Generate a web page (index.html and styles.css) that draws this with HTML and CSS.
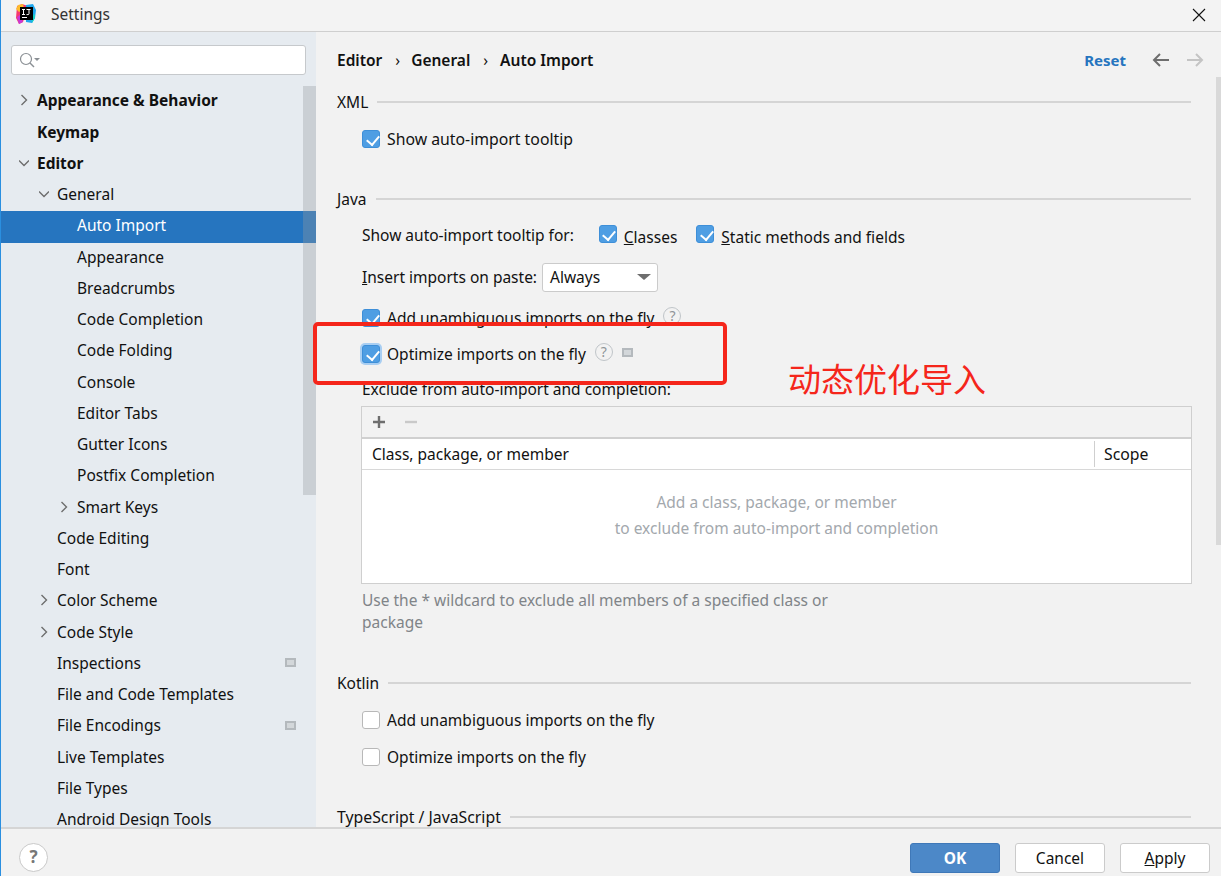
FILE: index.html
```html
<!DOCTYPE html>
<html lang="en">
<head>
<meta charset="utf-8">
<title>Settings</title>
<link rel="stylesheet" href="styles.css">
</head>
<body>
<div class="window">
  <header class="titlebar">
    <svg class="logo" width="20" height="20" viewBox="0 0 20 20">
      <path d="M1 2 6 0l6 2-5 16-4 2-3-6z" fill="#f5386f"/>
      <path d="M0 5 2 1l5-1 1 5-5 3z" fill="#fdbb2d"/>
      <path d="M1 13l3-2 3 7-4 2z" fill="#c838d8"/>
      <path d="M10 1l7-1 3 6-1 8-3 5-6-1z" fill="#1fa7ee"/>
      <path d="M15 12l4-2 0 4-3 5z" fill="#18d2c8"/>
      <rect x="4" y="3" width="13" height="13" fill="#000"/>
      <rect x="6" y="13" width="5" height="1" fill="#fff"/>
      <path d="M6 5.500h3M7.500 5.500v5M6 10.500h3M10.500 5.500h4M13 5.500v4.300q0 .8-1 .8h-1.500" fill="none" stroke="#fff" stroke-width="1"/>
    </svg>
    <span class="title">Settings</span>
    <svg class="close" width="14" height="14" viewBox="0 0 14 14"><path d="M1 1l12 12M13 1 1 13" stroke="#111" stroke-width="1.100" fill="none"/></svg>
  </header>

  <div class="body">
    <aside class="sidebar">
      <div class="search">
        <svg width="22" height="16" viewBox="0 0 22 16"><circle cx="7" cy="7" r="5.500" fill="none" stroke="#8a8f94" stroke-width="1.200"/><path d="M11 11l4 4" stroke="#8a8f94" stroke-width="1.400"/><path d="M15 6h6l-3 3z" fill="#8a8f94"/></svg>
      </div>
      <div class="tree-wrap">
        <ul class="tree">
          <li class="node l0 bold"><svg class="chev" viewBox="0 0 10 12"><path d="M2.500 1l5 5-5 5" /></svg>Appearance &amp; Behavior</li>
          <li class="node l0 bold"><span class="nochev"></span>Keymap</li>
          <li class="node l0 bold"><svg class="chev" viewBox="0 0 10 12"><path d="M0 3.500l5 5 5-5" /></svg>Editor</li>
          <li class="node l1"><svg class="chev" viewBox="0 0 10 12"><path d="M0 3.500l5 5 5-5" /></svg>General</li>
          <li class="node l2 selected">Auto Import</li>
          <li class="node l2">Appearance</li>
          <li class="node l2">Breadcrumbs</li>
          <li class="node l2">Code Completion</li>
          <li class="node l2">Code Folding</li>
          <li class="node l2">Console</li>
          <li class="node l2">Editor Tabs</li>
          <li class="node l2">Gutter Icons</li>
          <li class="node l2">Postfix Completion</li>
          <li class="node l1b"><svg class="chev" viewBox="0 0 10 12"><path d="M2.500 1l5 5-5 5" /></svg>Smart Keys</li>
          <li class="node l1c">Code Editing</li>
          <li class="node l1c">Font</li>
          <li class="node l1"><svg class="chev" viewBox="0 0 10 12"><path d="M2.500 1l5 5-5 5" /></svg>Color Scheme</li>
          <li class="node l1"><svg class="chev" viewBox="0 0 10 12"><path d="M2.500 1l5 5-5 5" /></svg>Code Style</li>
          <li class="node l1c">Inspections<span class="proj"></span></li>
          <li class="node l1c">File and Code Templates</li>
          <li class="node l1c">File Encodings<span class="proj"></span></li>
          <li class="node l1c">Live Templates</li>
          <li class="node l1c">File Types</li>
          <li class="node l1c">Android Design Tools</li>
        </ul>
        <div class="tree-thumb"></div>
      </div>
    </aside>

    <main class="main">
      <div class="crumbs">
        <span>Editor</span><span class="sep">›</span><span>General</span><span class="sep sep2">›</span><span>Auto Import</span>
        <span class="spacer"></span>
        <span class="reset">Reset</span>
        <svg class="arrow" width="18" height="14" viewBox="0 0 18 14"><path d="M17 7H2M8 1 2 7l6 6" fill="none" stroke="#6e6e6e" stroke-width="2"/></svg>
        <svg class="arrow" width="18" height="14" viewBox="0 0 18 14"><path d="M1 7h15M10 1l6 6-6 6" fill="none" stroke="#c4c4c4" stroke-width="2"/></svg>
      </div>

      <div class="section-title xml"><span>XML</span><i></i></div>
      <label class="row check-row r-xml"><span class="cb on"></span><span class="wide">Show auto-import tooltip</span></label>

      <div class="section-title java"><span>Java</span><i></i></div>
      <div class="row r-tip">
        <span class="lbl">Show auto-import tooltip for:</span>
        <span class="inline-check"><span class="cb on"></span><span><u>C</u>lasses</span></span>
        <span class="inline-check"><span class="cb on"></span><span><u>S</u>tatic methods and fields</span></span>
      </div>
      <div class="row r-paste">
        <span><u>I</u>nsert imports on paste:</span>
        <span class="combo">Always<i class="caret"></i></span>
      </div>
      <div class="row r-add"><span class="cb on"></span>Add unambiguous imports on the fly<span class="help"></span></div>
      <div class="row r-opt"><span class="cb on focus"></span>Optimize imports on the fly<span class="help"></span><span class="proj inline"></span></div>
      <div class="row r-excl">Exclude from auto-import and completion:</div>

      <div class="table">
        <div class="toolbar">
          <svg width="14" height="14" viewBox="0 0 14 14"><path d="M7 1v12M1 7h12" stroke="#6e6e6e" stroke-width="2.400"/></svg>
          <svg width="14" height="14" viewBox="0 0 14 14"><path d="M1 7h12" stroke="#c9c9c9" stroke-width="2.400"/></svg>
        </div>
        <div class="thead"><span class="c1">Class, package, or member</span><span class="c2">Scope</span></div>
        <div class="tbody"><p>Add a class, package, or member</p><p>to exclude from auto-import and completion</p></div>
      </div>
      <p class="hint">Use the * wildcard to exclude all members of a specified class or<br>package</p>

      <div class="section-title kotlin"><span>Kotlin</span><i></i></div>
      <div class="row r-k1"><span class="cb"></span>Add unambiguous imports on the fly</div>
      <div class="row r-k2"><span class="cb"></span>Optimize imports on the fly</div>
      <div class="section-title ts"><span class="wide">TypeScript / JavaScript</span><i></i></div>
      <div class="main-thumb"></div>
    </main>
  </div>

  <footer class="footer">
    <span class="round-help">?</span>
    <span class="spacer"></span>
    <button class="btn ok">OK</button>
    <button class="btn">Cancel</button>
    <button class="btn"><span><u>A</u>pply</span></button>
  </footer>

  <div class="redbox"></div>
  <div class="annot">动态优化导入</div>
</div>
</body>
</html>
```
FILE: styles.css
```css
* { box-sizing: border-box; }
html, body { margin: 0; height: 100%; }
body { font-family: "Noto Sans", "Open Sans", sans-serif; font-size: 15.5px; color: #111; background: #f2f2f2; overflow: hidden; }
.window { position: relative; width: 1221px; height: 876px; border-left: 1px solid #2a8fe0; display: flex; flex-direction: column; overflow: hidden; background: #f2f2f2; }
.wide { font-size: 15.8px; }

.titlebar { height: 32px; flex: none; display: flex; align-items: center; padding-left: 15px; padding-bottom: 3px; border-bottom: 1px solid #cfcfcf; background: #f3f3f3; }
.logo { flex: none; }
.title { margin-left: 15px; color: #333; }
.close { margin-left: auto; margin-right: 15px; margin-top: 1px; }

.body { flex: 1; display: flex; min-height: 0; }
.sidebar { width: 315px; flex: none; background: #e6ebf0; display: flex; flex-direction: column; overflow: hidden; }
.search { margin: 13px 10px 0 10px; height: 30px; flex: none; border: 1px solid #c6c9cc; border-radius: 3px; background: #fff; display: flex; align-items: center; padding-left: 7px; }
.tree-wrap { position: relative; flex: 1; min-height: 0; overflow: hidden; margin-top: 11px; }
.tree { list-style: none; margin: 0; padding: 0.25px 0 0; }
.node { height: 31.26px; padding-bottom: 3px; display: flex; align-items: center; white-space: nowrap; }
.bold { font-weight: 700; }
.l0 { padding-left: 18px; }
.l1 { padding-left: 38px; }
.l1b { padding-left: 58px; }
.l1c { padding-left: 56px; }
.l2 { padding-left: 76px; }
.chev { width: 10px; height: 12px; flex: none; margin-right: 8px; fill: none; stroke: #6e6e6e; stroke-width: 1.400; }
.nochev { width: 18px; flex: none; }
.selected { background: #2675bf; color: #fff; }
.proj { display: inline-block; width: 11px; height: 9px; border: 2px solid #b4b9bd; background: #d3d7da; margin-left: auto; margin-right: 20px; }
.proj.inline { margin: -3px 0 0 9px; }
.tree-thumb { position: absolute; right: 0; top: 0; width: 13px; height: 409px; background: rgba(150,155,160,.35); }

.main { position: relative; flex: 1; min-width: 0; padding-left: 21px; padding-right: 29px; overflow: hidden; }
.main-thumb { position: absolute; right: 0; top: 45px; width: 5px; height: 468px; background: #d9d9d9; }
.crumbs { height: 56px; display: flex; align-items: center; font-weight: 600; padding-bottom: 1px; margin-right: 1px; }
.sep { margin: 0 11px 0 13px; font-weight: 400; }
.sep2 { margin-right: 12px; }
.spacer { flex: 1; }
.reset { font-weight: 700; font-size: 15px; color: #2675bf; margin-right: 26px; }
.arrow { margin-right: 16px; }
.crumbs .arrow:last-child { margin-right: -13px; }

.section-title { display: flex; align-items: center; height: 28px; gap: 9px; margin-right: 1px; }
.section-title i { flex: 1; height: 2px; background: #d5d5d5; }
.row { display: flex; align-items: center; height: 30px; padding-left: 25px; white-space: nowrap; }
.r-xml { margin-top: 8px; }
.section-title.java { margin-top: 31px; }
.r-tip { margin-top: 7px; }
.lbl { margin-right: 25px; }
.inline-check { display: inline-flex; align-items: center; margin-right: 19px; padding-top: 4px; }
.inline-check .cb { margin-right: 7px; margin-top: -6px; }
.r-paste { margin-top: 12px; }
.combo { position: relative; display: inline-block; width: 116px; height: 29px; line-height: 27px; margin-left: 5px; padding-left: 7px; border: 1px solid #cbcbcb; border-radius: 3px; background: #fff; }
.caret { position: absolute; right: 6px; top: 10px; border-style: solid; border-width: 6px 7px 0; border-color: #6e6e6e transparent transparent; }
.r-add { margin-top: 11px; }
.r-opt { margin-top: 6px; }
.r-excl { margin-top: 5px; }
.cb { display: inline-block; position: relative; width: 18px; height: 18px; flex: none; margin-right: 7px; border: 1px solid #b8b8b8; border-radius: 3px; background: #fff; }
.cb.on { background: #4f9ee3; border-color: #3e8fd8; }
.cb.on::after { content: ""; position: absolute; left: 5.500px; top: 2px; width: 6px; height: 10px; border: solid #fff; border-width: 0 2.500px 2.500px 0; transform: rotate(40deg); }
.cb.focus { box-shadow: 0 0 0 2px #a8cef2; }
.help { display: inline-block; width: 18px; height: 18px; margin-left: 9px; margin-top: -4px; border: 1.500px solid #c0c5c9; border-radius: 50%; color: #8f9498; font-size: 14px; line-height: 15px; text-align: center; }
.help::after { content: "?"; }

.table { margin: 2px 0 0 24px; border: 1px solid #cfcfcf; background: #fff; }
.toolbar { height: 32px; display: flex; align-items: center; gap: 18px; padding-left: 10px; background: #f2f2f2; border-bottom: 2px solid #d0d0d0; }
.thead { height: 31px; display: flex; align-items: center; border-bottom: 1px solid #d8d8d8; }
.c1 { flex: 1; padding-left: 10px; }
.c2 { width: 97px; height: 26px; line-height: 26px; padding-left: 9px; border-left: 1px solid #cfcfcf; font-size: 15.8px; }
.tbody { height: 113px; padding-top: 19px; text-align: center; color: #a3a8ad; }
.tbody p { margin: 0; height: 26px; line-height: 26px; }
.hint { margin: 5px 0 0 25px; color: #808488; line-height: 22px; }
.section-title.kotlin { margin-top: 36px; }
.r-k1 { margin-top: 8px; }
.r-k2 { margin-top: 7px; }
.section-title.ts { margin-top: 31px; }

.footer { height: 49px; flex: none; display: flex; align-items: center; gap: 15px; padding: 10px 11px 0 18px; border-top: 2px solid #d5d5d5; background: #f2f2f2; position: relative; z-index: 1; }
.round-help { width: 29px; height: 29px; border: 1.500px solid #c9c9c9; border-radius: 50%; background: #fff; color: #777; font-weight: 700; text-align: center; line-height: 26px; font-size: 17px; }
.btn { width: 90px; height: 30px; padding: 0; font: inherit; color: #111; background: #fff; border: 1.500px solid #cbcbcb; border-radius: 3px; }
.btn.ok { background: #4c88c8; border-color: #3f78b8; color: #fff; font-weight: 700; }

.redbox { position: absolute; left: 312px; top: 322px; width: 414px; height: 63px; border: 4px solid #f5261b; border-radius: 5px; }
.annot { position: absolute; left: 787px; top: 355px; font-family: "Noto Sans CJK SC", sans-serif; font-size: 33px; line-height: 46px; color: #f5261b; }
```
